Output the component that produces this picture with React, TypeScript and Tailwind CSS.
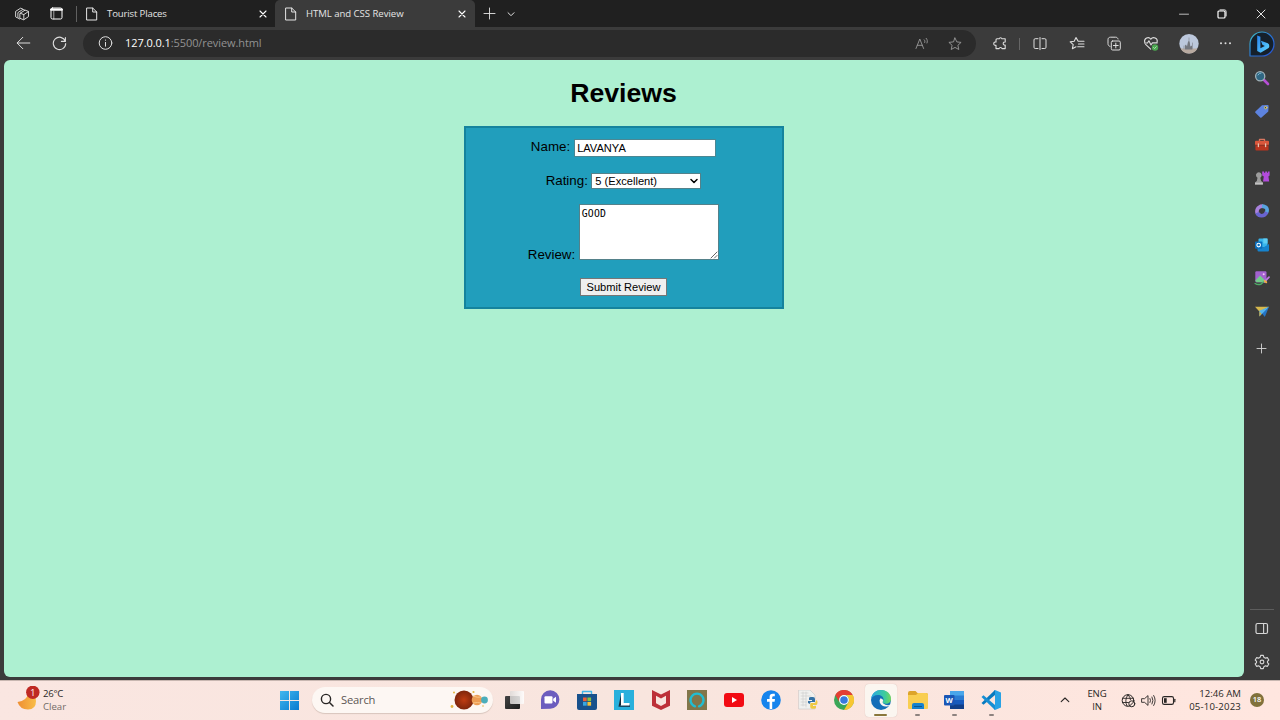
import type { ReactNode } from "react";

function Svg({ s = 16, vb = 16, children, className = "" }: { s?: number; vb?: number; children: ReactNode; className?: string }) {
  return (
    <svg width={s} height={s} viewBox={`0 0 ${vb} ${vb}`} fill="none" stroke="currentColor" strokeWidth="1" strokeLinecap="round" strokeLinejoin="round" className={`shrink-0 ${className}`}>
      {children}
    </svg>
  );
}

const Page = () => (
  <Svg s={14} vb={14}><path d="M2 1h5.7l4 4v8H2zM7.7 1v4h4" /></Svg>
);
const Close = () => (
  <Svg s={8} vb={8} className="text-white"><path d="M1 1l6 6M7 1L1 7" strokeWidth="1.1" /></Svg>
);
const starPath = "M8 2l1.8 3.9 4.3.5-3.2 2.9.9 4.2L8 11.4l-3.8 2.1.9-4.2L1.9 6.4l4.3-.5z";

function TabStrip() {
  return (
    <div className="flex h-[27px] bg-[#202020] text-[#e4e4e4]">
      <div className="flex w-[76px] items-center pl-[14px]">
        <Svg><path d="M3.2 11.8l-1.6-1V5.4l5-3.2 2 .8M5.6 13l-1.7-1V6.6l5-3.2 2 .8" strokeWidth=".9" /><path d="M6.2 7.2l4.9-3.1 3.4 1.3v5.2l-4.8 3.2-3.5-1.4zM6.4 7.3l3.4 1.3 4.5-3M9.8 8.6v4.8" strokeWidth=".9" /></Svg>
        <Svg s={13} vb={13} className="ml-5 text-white"><rect x="1" y="1" width="11" height="11" rx="1.5" /><path d="M1.2 2.6h10.6" strokeWidth="2.4" /><path d="M3.8 4v8" strokeWidth=".6" /></Svg>
      </div>
      <div className="flex w-[199px] items-center">
        <div className="mr-2 h-4 w-px bg-[#606060]" />
        <Page />
        <span className="mt-px ml-[8px] font-['Open_Sans',sans-serif] text-[9.6px] tracking-[-0.15px] whitespace-nowrap">Tourist Places</span>
        <div className="mr-[8px] ml-auto flex"><Close /></div>
      </div>
      <div className="flex w-[200px] items-center rounded-t-[5px] bg-[#3b3b3b] pl-[9px]">
        <Page />
        <span className="mt-px ml-[8px] font-['Open_Sans',sans-serif] text-[9.6px] tracking-[-0.05px] whitespace-nowrap">HTML and CSS Review</span>
        <div className="mr-[9px] ml-auto flex"><Close /></div>
      </div>
      <div className="flex items-center pl-[8px]">
        <Svg s={13} vb={13}><path d="M6.5 1v11M1 6.5h11" strokeWidth=".9" /></Svg>
        <Svg s={8} vb={8} className="ml-[11px]"><path d="M1 2.7l3 3 3-3" /></Svg>
      </div>
      <div className="ml-auto flex items-center">
        <div className="flex w-[38px] justify-center"><Svg s={10} vb={10}><path d="M.5 5.2h9" strokeWidth=".8" /></Svg></div>
        <div className="flex w-[38px] justify-center"><Svg s={10} vb={10} className="text-white"><rect x="1" y="2" width="7" height="7" rx="1" strokeWidth="1.2" /><path d="M3 .9h4.5c1 0 1.6.6 1.6 1.6V7" strokeWidth=".9" /></Svg></div>
        <div className="flex w-[39px] justify-center"><Svg s={10} vb={10}><path d="M1 1l8 8M9 1L1 9" /></Svg></div>
      </div>
    </div>
  );
}

function Tool({ children }: { children: ReactNode }) {
  return <div className="flex w-[37.2px] shrink-0 items-center justify-center">{children}</div>;
}

function Toolbar() {
  return (
    <div className="flex h-[33px] items-center bg-[#3b3b3b] text-[#dedede]">
      <div className="flex w-[83px] shrink-0 items-center pl-4">
        <Svg s={15} vb={15}><path d="M13.8 7H1.3M6.8 1.3L1.1 7l5.7 5.7" /></Svg>
        <Svg s={15} vb={15} className="ml-[21px]"><path d="M13.3 5.2A6.2 6.2 0 1 0 13.7 7.5M13.4 1.5v3.9H9.4" strokeWidth="1.1" /></Svg>
      </div>
      <div className="flex h-[27px] w-[893px] shrink-0 items-center rounded-full bg-[#2b2b2b] pl-[15px]">
        <Svg s={15} vb={15}><circle cx="7.5" cy="7" r="6.3" /><path d="M7.5 6.4v3.8M7.5 4v.3" /></Svg>
        <span className="ml-[12px] font-['Open_Sans',sans-serif] text-[11px] tracking-[-0.08px] whitespace-nowrap text-[#929292]"><span className="text-white">127.0.0.1</span>:5500/review.html</span>
        <div className="mr-[13px] ml-auto flex items-center gap-[17px] text-[#9a9a9a]">
          <Svg><path d="M2 12.5L5.8 3l3.8 9.5M3.3 9.3h5M10.2 3.8c.8.8.9 1.6.5 2.7M12.2 2.3c1.3 1.4 1.4 3.2.8 4.7" strokeWidth=".9" /></Svg>
          <Svg><path d={starPath} strokeWidth=".9" /></Svg>
        </div>
      </div>
      <div className="flex items-center pl-[5px]">
        <Tool><Svg><path d="M5 2.8h2.1a1.5 1.5 0 0 1 2.9 0h3.2V6a1.6 1.6 0 1 0 0 3.1v3.5H10a1.5 1.5 0 0 0-2.9 0H4V9.3a1.7 1.7 0 1 1 0-3.2V3.8q0-1 1-1z" strokeWidth="1.1" /></Svg></Tool>
        <div className="mx-px h-3 w-px bg-[#666]" />
        <Tool><Svg><path d="M6 2.7H3.2Q2 2.7 2 3.9v7.4q0 1.2 1.2 1.2H6M10 2.7h2.8q1.2 0 1.2 1.2v7.4q0 1.2-1.2 1.2H10M8 1.5v12.2" /></Svg></Tool>
        <Tool><Svg><path d="M9 5L7 1.6 5.2 5.3l-4 .6 3 2.8-.8 4L7 10.8M9.2 5.2H15M9.5 8H15M8.7 10.8H15" strokeWidth="1.1" /></Svg></Tool>
        <Tool><Svg><rect x="5.3" y="5" width="9" height="9" rx="1.3" /><path d="M9.8 7.1v4.8M7.4 9.5h4.8M12 3C11.7 1.8 10.8 1.2 9.6 1.2h-5C2.8 1.2 2 2.2 2 3.7v4c0 1.4.7 2.4 2 2.7" /></Svg></Tool>
        <Tool><Svg><path d="M7.7 13.2L2.6 8.4M1.7 6.2c-1-4 4-6.1 6.1-3 2.3-3 7.4-1 6.3 3M1.5 7h3l1.4-2.2L8 8.9l1.4-2h4.8" strokeWidth="1.1" /><circle cx="12" cy="11.5" r="3.2" fill="#4ba64f" stroke="none" /><path d="M10.6 11.5l1 1 1.7-1.8" stroke="#dcf4df" strokeWidth=".7" /></Svg></Tool>
        <Tool><Svg s={20} vb={20}><circle cx="10" cy="9.7" r="9.7" fill="#bcc8dc" stroke="none" /><path d="M1.5 14.5h17a9.7 9.7 0 0 1-17 0" fill="#b8aaa0" stroke="none" /><path d="M6 15.5v-4l1-1 1 2 .8-4L10 6l.8 2.5.5 4 1.7-1v4z" fill="#74777e" stroke="none" /><path d="M10 4v2M13.5 9v6M5 12v3" stroke="#858993" strokeWidth=".7" /></Svg></Tool>
        <Tool><Svg s={13} vb={13}><g fill="currentColor" stroke="none"><circle cx="2" cy="6.2" r="1" /><circle cx="6.5" cy="6.2" r="1" /><circle cx="11" cy="6.2" r="1" /></g></Svg></Tool>
        <div className="flex w-[35px] justify-center">
          <Svg s={26} vb={26}>
            <defs>
              <linearGradient id="ring" x1="0" y1="0" x2="1" y2="1"><stop stopColor="#43c3c5" /><stop offset=".5" stopColor="#2774d5" /><stop offset="1" stopColor="#2951d4" /></linearGradient>
              <linearGradient id="bing" x1="0" y1="0" x2="1" y2="1"><stop stopColor="#2783ee" /><stop offset="1" stopColor="#60d8ff" /></linearGradient>
            </defs>
            <path d="M1 25V13A12 12 0 1 1 13 25z" fill="#15202b" stroke="url(#ring)" strokeWidth="1.2" />
            <path d="M8.2 4.6l3.2 1.2v11.4l4.4-2.3-2.4-1.2-1.5-4 6.9 2.5q1.8 1 1.5 3.3-.2 1.3-1.5 2.1l-7.2 4.1-3.4-1.8z" fill="url(#bing)" stroke="none" />
          </Svg>
        </div>
      </div>
    </div>
  );
}

function ReviewForm() {
  return (
    <main className="flex w-[1240px] flex-col items-center rounded-[6px] bg-[#adf0d1] pt-[18px] font-['Liberation_Sans',Arial,sans-serif] text-black">
      <h1 className="h-[31px] text-[26.67px] leading-[31px] font-bold">Reviews</h1>
      <form className="mt-[17px] flex h-[183.4px] w-[320px] flex-col items-center border-2 border-[#15839d] bg-[#219ebc] text-[13.33px]">
        <div className="mt-[11px] flex h-[18px] gap-[4px]">
          <label className="leading-[15px]">Name:</label>
          <input readOnly value="LAVANYA" className="h-[18.4px] w-[142px] border border-[#4b8793] bg-white px-[2px] text-[11.1px] outline-none" />
        </div>
        <div className="mt-[16px] flex h-[16px] gap-[3.5px]">
          <label className="leading-[15px]">Rating:</label>
          <div className="grid h-[16px] w-[110px] items-center">
            <select defaultValue="5" className="col-start-1 row-start-1 h-[16px] w-full appearance-none border border-[#54818a] bg-white pl-[3px] text-[11.1px] leading-[14px]">
              <option value="5">5 (Excellent)</option>
            </select>
            <Svg s={8} vb={8} className="pointer-events-none col-start-1 row-start-1 mr-[3px] justify-self-end"><path d="M1 2.5l3 3 3-3" strokeWidth="1.5" /></Svg>
          </div>
        </div>
        <div className="mt-[15px] flex h-[56px] items-end gap-[4px]">
          <label className="mb-[-2px] leading-[15px]">Review:</label>
          <div className="grid h-[56px] w-[140px]">
            <textarea readOnly value="GOOD" className="col-start-1 row-start-1 h-full w-full resize-none border border-[#54818a] bg-white px-[1.5px] py-[2px] font-['DejaVu_Sans_Mono',monospace] text-[9.8px] leading-[13px] tracking-[0.2px] outline-none" />
            <Svg s={8} vb={8} className="pointer-events-none col-start-1 row-start-1 mr-px mb-px self-end justify-self-end text-[#555]"><path d="M1 7l6-6M4.5 7L7 4.5" strokeWidth=".9" /></Svg>
          </div>
        </div>
        <button type="button" className="mt-[18px] h-[18px] w-[87px] border border-[#767676] bg-[#efefef] pb-px text-[11.1px] leading-[14px] whitespace-nowrap">Submit Review</button>
      </form>
    </main>
  );
}

const Side = ({ children }: { children: ReactNode }) => (
  <div className="flex h-[33.4px] shrink-0 items-center justify-center"><Svg>{children}</Svg></div>
);

function Sidebar() {
  return (
    <aside className="flex w-[37px] flex-col pt-px text-[#d6d6d6]">
      <Side><path d="M10 10l4 4" stroke="#b64ed5" strokeWidth="2.6" /><circle cx="6.2" cy="6.2" r="4.6" fill="#306783" stroke="#a1b1b8" strokeWidth="1.3" /><path d="M4 5q1-2 3-2" stroke="#7ebad4" /></Side>
      <Side><path d="M1.4 8.4L8 2.3l5.6-.2q1 0 1 1l-.3 5.3-6.8 6.2q-.7.5-1.3-.1L1.4 9.8q-.6-.7 0-1.4z" fill="#5d83df" stroke="none" /><circle cx="11.7" cy="4.6" r="1.2" fill="#31414f" stroke="#e3ce61" /></Side>
      <Side><g transform="translate(0 1)"><path d="M5.5 4V2.3h5V4" stroke="#d97761" strokeWidth="1.3" /><rect x="1" y="3.8" width="14" height="4.8" rx="1" fill="#da573c" stroke="none" /><rect x="1.4" y="8.1" width="13.2" height="5.3" rx="1" fill="#b9351f" stroke="none" /><path d="M1 8.2h14" stroke="#752e24" strokeWidth=".7" /><path d="M4.4 7v2.5M11.6 7v2.5" stroke="#e4c4b2" strokeWidth="1.3" /></g></Side>
      <Side><g stroke="none"><path d="M8.2 1.4h1.8v1.4h1.2V1.4H13v1.4h.9V1.4h1.7v4.2l-1.2 1 .8 5H9l.8-5-1.6-1z" fill="#b24bdb" /><path d="M2.4 6.8a2.9 2.9 0 1 1 4.9 0l-1 1 .8 3.3 1.8 1.4v1.9H1v-1.9l1.8-1.4.7-3.3z" fill="#9c9c9c" /><path d="M1 12.7h7.9v1.8H1z" fill="#c2c2c2" /></g></Side>
      <Side><g fill="none" strokeWidth="3.6" strokeLinecap="butt"><path d="M5.6 12.2Q3 11 2.9 8.7q0-3.2 2.2-4.5Q7 3 9 3.2" stroke="#a982dd" /><path d="M8 3.1q3.5.2 4.8 2.3Q13.8 8 12 10.2" stroke="#58a4e0" /><path d="M12.8 9.2q-2 3.8-5.3 3.6Q4.2 12.6 3 9.8" stroke="#6964d0" /></g></Side>
      <Side><g stroke="none"><rect x="4.5" y="1.5" width="9" height="9" rx="1" fill="#37b4eb" /><path d="M3.5 7.2l5.8 3.3L15 7v6.3q0 1.2-1.2 1.2H4.7q-1.2 0-1.2-1.2z" fill="#1683cd" /><path d="M9.3 1.5h4.2v5H9.3z" fill="#60cdf2" /><rect x="1" y="4.5" width="7.3" height="7.3" rx=".8" fill="#096dbb" /></g><circle cx="4.65" cy="8.1" r="1.8" stroke="#fff" strokeWidth="1.1" /></Side>
      <Side><g stroke="none"><rect x="1.3" y="1.3" width="11.2" height="11" rx="1.2" fill="#a362cf" /><path d="M1.3 10.5l4.8-5 5.8 5.8-1 1H2.3z" fill="#73cc8a" /><circle cx="9.7" cy="4.2" r="1" fill="#f5c5fa" /></g><path d="M15 7.2l-4.6 4.6" stroke="#bf7be5" strokeWidth="1.7" /><path d="M10.8 11l1.4 1.3" stroke="#f0ae43" strokeWidth="2" /><path d="M1.2 13.5q3 2 6.2.3l2-1.8" stroke="#4fac67" strokeWidth="1.5" /></Side>
      <Side><g stroke="none"><path d="M1 3.8h14L5.6 8.8z" fill="#d6b84d" /><path d="M15 3.8L10.8 14 7 9z" fill="#2475c7" /><path d="M15 3.8L5.4 7.8v5.6z" fill="#57b5ed" /><path d="M5.4 8.5v5l2.1-2.8z" fill="#d3aa37" /></g></Side>
      <div className="mt-[14px] flex h-3 items-center justify-center"><Svg s={11} vb={11}><path d="M5.5 1v9M1 5.5h9" strokeWidth=".9" /></Svg></div>
      <div className="mx-auto mt-auto h-px w-6 bg-[#5d5d5d]" />
      <div className="mt-[11px] flex h-4 justify-center"><Svg s={15} vb={15}><rect x="2" y="2.5" width="11.5" height="10" rx="1.5" strokeWidth="1.2" /><path d="M9.6 2.7v9.6" strokeWidth="1.1" /></Svg></div>
      <div className="mt-[17px] mb-[10px] flex h-4 justify-center"><Svg s={16} vb={24}><circle cx="12" cy="12" r="2.8" strokeWidth="1.7" /><path d="M10 2h4l.8 3 2.4 1.2 3-.7 2 3.5-2 2.1v1.8l2 2.1-2 3.5-3-.7-2.4 1.2-.8 3h-4l-.8-3-2.4-1.2-3 .7-2-3.5 2-2.1v-1.8L1.8 9l2-3.5 3 .7L9.2 5z" strokeWidth="1.7" /></Svg></div>
    </aside>
  );
}

function TaskIcon({ children, state = "" }: { children: ReactNode; state?: "" | "open" | "active" }) {
  return (
    <div className={state === "active" ? "mx-[2.36px] flex h-[33px] w-8 shrink-0 flex-col items-center rounded-[4px] bg-[#fbf6f0] pt-[6.5px] shadow-[0_0_1px_#c7b6ae]" : "flex h-[33px] w-[36.72px] shrink-0 flex-col items-center pt-[6.5px]"}>
      <Svg s={20} vb={20}><g stroke="none">{children}</g></Svg>
      {state === "active" && <div className="mt-[3.5px] h-[2px] w-[13px] rounded-full bg-[#8a773b]" />}
      {state === "open" && <div className="mt-[3.5px] h-[2px] w-[5px] rounded-full bg-[#8d827f]" />}
    </div>
  );
}

function Taskbar() {
  return (
    <div className="flex h-10 items-center bg-gradient-to-r from-[#fae6e1] via-[#f8e5de] to-[#ffe6df] font-['Open_Sans',sans-serif] text-[#292625] shadow-[inset_0_1px_#c8b7b1]">
      <div className="flex w-[279px] items-center pl-[16px]">
        <svg width="26" height="28" viewBox="0 0 26 28">
          <defs><linearGradient id="moon" x2="1"><stop stopColor="#ee8e32" /><stop offset="1" stopColor="#f9bd48" /></linearGradient></defs>
          <path d="M12 7q-1 8-10.5 9Q4 23.500 12 23.500q8 0 8-8.500 0-5-3-9z" fill="url(#moon)" />
          <circle cx="16.8" cy="6.3" r="6.7" fill="#bf2923" />
          <text x="16.8" y="9.6" fill="white" fontSize="9" fontFamily="Open Sans" textAnchor="middle">1</text>
        </svg>
        <div className="ml-px text-[9.6px] leading-[13px]"><div className="tracking-[-0.25px]">26°C</div><div className="text-[#746c69]">Clear</div></div>
      </div>
      <Svg s={21} vb={21}><defs><linearGradient id="win" x2="1" y2="1"><stop stopColor="#42b7ee" /><stop offset="1" stopColor="#087bd0" /></linearGradient></defs><path d="M1 1h9v9H1zM11 1h9v9h-9zM1 11h9v9H1zM11 11h9v9h-9z" fill="url(#win)" stroke="none" /></Svg>
      <div className="ml-[12px] flex h-[26px] w-[181px] shrink-0 items-center rounded-full bg-[#fdf7f3] pl-[8px] shadow-[0_1px_1px_#d8c5bd]">
        <Svg s={14} vb={14}><circle cx="6" cy="6" r="4.6" strokeWidth="1.4" /><path d="M9.5 9.5L13 13" strokeWidth="1.5" /></Svg>
        <span className="ml-[7px] pt-px text-[11.2px] tracking-[-0.2px] text-[#5c5653]">Search</span>
        <svg width="40" height="22" viewBox="0 0 40 22" className="mr-[4px] ml-auto">
          <defs><radialGradient id="mars"><stop stopColor="#bf3c12" /><stop offset="1" stopColor="#7e260c" /></radialGradient></defs>
          <circle cx="15" cy="11" r="9.5" fill="url(#mars)" /><circle cx="28" cy="11" r="5.3" fill="#ed9d55" /><circle cx="35.5" cy="11" r="3.4" fill="#4baebb" />
          <path d="M24 7q5 2 8 1M24 14q5-1 8 0" stroke="#f8c486" fill="none" />
          <g fill="#e2b43f"><circle cx="5" cy="3.5" r="1" /><circle cx="3" cy="17.5" r="1.4" /><circle cx="24.5" cy="3" r="1.1" /><circle cx="34" cy="17" r=".8" /></g>
        </svg>
      </div>
      <div className="ml-[2.4px] flex items-center">
        <TaskIcon><defs><linearGradient id="task" x2="1"><stop stopColor="#dedad8" /><stop offset="1" stopColor="#fff" /></linearGradient><linearGradient id="taskDark" x2="1" y2="1"><stop stopColor="#444" /><stop offset="1" stopColor="#1d1d1d" /></linearGradient></defs><rect x="1" y="6" width="15" height="13" rx="1" fill="url(#taskDark)" /><rect x="6" y="1" width="14" height="13" rx="1" fill="url(#task)" opacity=".85" /></TaskIcon>
        <TaskIcon><path d="M1 19V9.500a9.200 9.200 0 1 1 9.200 9.200z" fill="#6c5dbe" /><rect x="4.5" y="6.2" width="8" height="7.2" rx="1" fill="white" /><path d="M13.2 8.8l2.8-2v6l-2.8-2z" fill="white" /></TaskIcon>
        <TaskIcon><path d="M5.5 5V1.5h9V5" stroke="#41b6e9" strokeWidth="1.4" /><path d="M0 4h20v14q0 2-2 2H2q-2 0-2-2z" fill="#18518c" /><path d="M6 7.5h3.7v3.7H6z" fill="#ed6037" /><path d="M10.4 7.5h3.7v3.7h-3.7z" fill="#8ac340" /><path d="M6 12h3.7v3.7H6z" fill="#38a7e0" /><path d="M10.4 12h3.7v3.7h-3.7z" fill="#f4c039" /></TaskIcon>
        <TaskIcon><path d="M0 0h20v20H0z" fill="#29b0dc" /><path d="M7 4L4.5 16.8 7 15z" fill="#162a38" /><path d="M4.5 17L7.3 14.6H16V17z" fill="#1a4962" /><path d="M7 3h2.700v10H15.500v2.500H7z" fill="white" /></TaskIcon>
        <TaskIcon><path d="M1 0l9 4.600L19 0v15.800L10 20l-9-4.200zM5 5.800v7.500l5 2.600 5-2.600V5.800L10 8.500z" fill="#bd3038" fillRule="evenodd" /></TaskIcon>
        <TaskIcon><path d="M0 0h20v20H0z" fill="#82764a" /><path d="M8 16.400A6.500 6.500 0 1 1 12 16.400" stroke="#20bdd2" strokeWidth="2.3" /></TaskIcon>
        <TaskIcon><rect y="3" width="20" height="14" rx="3" fill="#f20b13" /><path d="M8 7l5 3-5 3z" fill="white" /></TaskIcon>
        <TaskIcon><circle cx="10" cy="10" r="9.8" fill="#1684ed" /><path d="M8.6 19v-7.2H6V9h2.6V6.8q0-3 3.2-3h2v2.500h-1.400q-1.200 0-1.200 1.200V9H14l-.4 2.800h-2.400V19z" fill="white" /></TaskIcon>
        <TaskIcon><path d="M1 0h11l5 5v14H1z" fill="#f1f1ef" stroke="#c8c8c8" strokeWidth=".6" /><path d="M3 3h7M3 6h10M3 9h5M3 12h6M3 15h5M5 2v14M8 2v15" stroke="#cfcfcf" strokeWidth=".7" /><path d="M10 13v-2h4V10h-3V8q0-1 2-1h2q2 0 2 2v3h-4q-1 0-1 2z" fill="#3572a5" /><path d="M18.3 10q1.200 0 1.200 2.500t-1.500 2.500h-3v1h3v1.500q0 1.200-2 1.200h-2q-1.800 0-1.800-2V14q0-1 1-1h4z" fill="#efc943" /></TaskIcon>
        <TaskIcon><circle cx="10" cy="10" r="10" fill="#3ba657" /><path d="M1.3 5A10 10 0 0 1 18.700 5H10a5 5 0 0 0-4.400 7.400z" fill="#e43e32" /><path d="M18.7 5A10 10 0 0 1 10 20l4.400-7.500A5 5 0 0 0 10 5z" fill="#f8c632" /><circle cx="10" cy="10" r="4.9" fill="white" /><circle cx="10" cy="10" r="3.8" fill="#3879dd" /></TaskIcon>
        <TaskIcon state="active"><defs><linearGradient id="edgeTop" x2="1"><stop stopColor="#29a8e4" /><stop offset=".7" stopColor="#3dcc9b" /><stop offset="1" stopColor="#75d75b" /></linearGradient></defs><circle cx="10" cy="10" r="10" fill="#146eb8" /><path d="M0 9C1 3 5 0 10 0c6 0 10 4 10 8.700 0 3.300-2.400 5-5 5-2.200 0-3.500-.8-3.500-1.700 0-.7 1-.8 1-2.700C12.500 6.800 10 5 7 5 3.500 5 1 7 0 9z" fill="url(#edgeTop)" /><path d="M9.5 8.300Q8 10 8.800 12.500q2 5 8.300 3.800 2-.5 2.500-1.400-4.500 1.200-7.300-1.300-1.100-1-.5-2 1.500-2-2.300-3.300z" fill="#fbf6f0" /></TaskIcon>
        <TaskIcon state="open"><path d="M0 3q0-2 2-2h5.500l2 2H18q2 0 2 2v13H0z" fill="#dda42a" /><path d="M0 5h8l2-2h8q2 0 2 2v13q0 1-1 1H1q-1 0-1-1z" fill="#f9ce51" /><path d="M4 19v-4q0-2 2-2h8q2 0 2 2v4z" fill="#1782ce" /><path d="M6 16h8v1H6z" fill="#0e558f" /></TaskIcon>
        <TaskIcon state="open"><path d="M6 1h14v5H6z" fill="#4aa6ea" /><path d="M6 5.500h14v5H6z" fill="#2b7cd3" /><path d="M6 10h14v5H6z" fill="#185abd" /><path d="M6 14.500h14V19H6z" fill="#123e88" /><rect y="5" width="10.5" height="10.5" rx="1" fill="#1a56b5" /><text x="5.2" y="13" fill="white" fontSize="7.5" fontWeight="700" fontFamily="Open Sans" textAnchor="middle">W</text></TaskIcon>
        <TaskIcon state="open"><path d="M14 0l6 2.500v15L14 20l-1-1 1-4V5l-1-4z" fill="#29a2e5" /><path d="M14 5L2.500 14.700.5 13 14 0z" fill="#087abf" /><path d="M14 15L2.500 5.300.5 7 14 20z" fill="#168ed3" /></TaskIcon>
      </div>
      <div className="ml-auto flex items-center">
        <Svg s={10} vb={10}><path d="M1.2 6.700L5 3l3.800 3.700" strokeWidth="1.1" /></Svg>
        <div className="ml-[16px] w-[22px] text-center text-[9.6px] leading-[13px] tracking-[-0.1px]">ENG<br />IN</div>
        <Svg s={15} vb={15} className="ml-[13px]"><circle cx="7" cy="7.5" r="5.8" /><path d="M1.5 5.300h11M1.500 9.500h6M7 1.700Q3 7 6 13M7 1.700q2.400 2.500 2.500 5" strokeWidth=".9" /><circle cx="10.8" cy="10.8" r="3" fill="#f9e4dd" /><path d="M8.900 12.700l3.900-3.900" /></Svg>
        <Svg s={15} vb={15} className="ml-[5px]"><path d="M1 5.700h2.500L7 2.600v9.800L3.500 9.300H1zM9 5.500q1.200 2 0 4M11 4q2 3.500 0 7M12.700 2.500q3 5 0 10" strokeWidth=".9" /></Svg>
        <Svg s={15} vb={15} className="ml-[5px]"><rect x="1.5" y="3.6" width="11" height="7.8" rx="1.7" strokeWidth="1.1" /><path d="M13.800 6.300v2.400" strokeWidth="1.2" /><rect x="3" y="5.2" width="2.7" height="4.6" fill="currentColor" stroke="none" /></Svg>
        <div className="ml-[10px] w-[55px] text-right text-[9.6px] leading-[13px] whitespace-nowrap"><div>12:46 AM</div><div className="tracking-[0.18px]">05-10-2023</div></div>
        <div className="mr-[16px] ml-[9px] flex size-[14px] items-center justify-center rounded-full bg-[#81713b] text-[7.5px] font-semibold text-white">18</div>
      </div>
    </div>
  );
}

export default function App() {
  return (
    <div className="flex h-[720px] w-[1280px] flex-col overflow-hidden">
      <TabStrip />
      <Toolbar />
      <div className="flex h-[620px] bg-[#3b3b3b] pl-[3.5px]">
        <div className="flex h-[617px]"><ReviewForm /></div>
        <Sidebar />
      </div>
      <Taskbar />
    </div>
  );
}
